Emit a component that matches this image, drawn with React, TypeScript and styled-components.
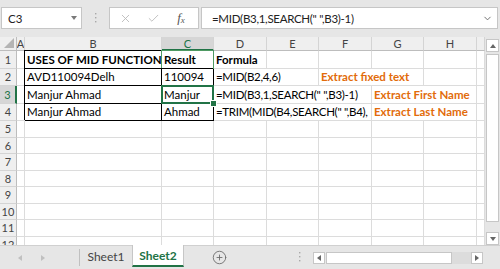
import React from "react";
import styled, { createGlobalStyle, css } from "styled-components";
import { X, Check, ChevronDown, CirclePlus } from "lucide-react";

const GREEN = "#217346";
const CHROME = "#e6e6e6";
const EDGE = "#c6c6c6";
const GRID = "#dcdcdc";
const ORANGE = "#e26b0a";

const GlobalStyle = createGlobalStyle`
  html, body { margin: 0; padding: 0; background: ${CHROME}; }
  body { font-family: Lato, "Liberation Sans", sans-serif; }
`;

const Window = styled.div`
  width: 500px;
  height: 269px;
  overflow: hidden;
  display: flex;
  flex-direction: column;
  background: ${CHROME};
  font-family: Lato, "Liberation Sans", sans-serif;
`;

/* ---------- formula bar ---------- */

const FormulaBar = styled.div`
  height: 37px;
  flex: none;
  display: flex;
  align-items: flex-start;
  padding: 7px 2px 0 1px;
  box-sizing: border-box;
`;

const NameBox = styled.div`
  width: 81px;
  height: 22px;
  box-sizing: border-box;
  background: #fff;
  border: 1px solid ${EDGE};
  display: flex;
  align-items: center;
  justify-content: space-between;
  padding: 0 4px 0 6px;
  font-size: 11.5px;
  color: #222;
`;

const Grip = styled.div<{ $w: number }>`
  width: ${(p) => p.$w}px;
  height: 22px;
  display: flex;
  align-items: center;
  justify-content: center;
  flex: none;
`;

const FxBox = styled.div`
  width: 90px;
  height: 22px;
  box-sizing: border-box;
  background: #fff;
  border: 1px solid ${EDGE};
  display: flex;
  align-items: center;
  padding-left: 1px;
`;

const FxButton = styled.div`
  width: 28px;
  display: flex;
  align-items: center;
  justify-content: center;
  color: #b8b8b8;
`;

const FxLabel = styled.span`
  font-family: "Liberation Serif", serif;
  font-style: italic;
  font-size: 13px;
  color: #555;
  & sub {
    font-size: 9px;
    vertical-align: -1px;
  }
`;

const FormulaInput = styled.div`
  flex: 1;
  margin-left: 2px;
  height: 22px;
  box-sizing: border-box;
  background: #fff;
  border: 1px solid ${EDGE};
  display: flex;
  align-items: center;
  justify-content: space-between;
  padding: 0 4px 0 10px;
  font-size: 11.5px;
  letter-spacing: -0.3px;
  color: #222;
  white-space: pre;
`;

/* ---------- sheet ---------- */

const SheetArea = styled.div`
  height: 208px;
  flex: none;
  display: flex;
`;

const Sheet = styled.div`
  width: 485px;
  height: 208px;
  overflow: hidden;
  background: #fff;
  display: grid;
  grid-template-columns: 17px 8px 137px 52px 53px 52px 53px 52px 53px 8px;
  grid-template-rows: 14px repeat(4, 17.5px) repeat(8, 16.5px);
  font-size: 11.5px;
`;

const headerBase = css`
  background: #efefef;
  color: #444;
  font-size: 11px;
  display: flex;
  align-items: center;
  justify-content: center;
  box-sizing: border-box;
  overflow: hidden;
`;

const Corner = styled.div`
  ${headerBase};
  border-right: 1px solid #bdbdbd;
  border-bottom: 1px solid #bdbdbd;
  align-items: flex-end;
  justify-content: flex-end;
  padding: 0 2px 2px 0;
`;

const ColHeader = styled.div<{ $selected?: boolean }>`
  ${headerBase};
  border-right: 1px solid #d4d4d4;
  border-bottom: 1px solid #bdbdbd;
  ${(p) =>
    p.$selected &&
    css`
      background: #d6d6d6;
      color: ${GREEN};
      border-bottom: 2px solid ${GREEN};
    `}
`;

const RowHeader = styled.div<{ $selected?: boolean }>`
  ${headerBase};
  border-right: 1px solid #bdbdbd;
  border-bottom: 1px solid #d4d4d4;
  ${(p) =>
    p.$selected &&
    css`
      background: #d6d6d6;
      color: ${GREEN};
      border-right: 2px solid ${GREEN};
    `}
`;

const Cell = styled.div<{
  $span?: number;
  $bold?: boolean;
  $accent?: boolean;
  $formula?: boolean;
  $frame?: string;
  $active?: boolean;
}>`
  grid-column: span ${(p) => p.$span ?? 1};
  box-sizing: border-box;
  border-right: 1px solid ${GRID};
  border-bottom: 1px solid ${GRID};
  display: flex;
  align-items: flex-end;
  padding: 0 2px 1px;
  line-height: 15px;
  white-space: pre;
  overflow: hidden;
  color: ${(p) => (p.$accent ? ORANGE : "#000")};
  font-weight: ${(p) => (p.$bold ? 700 : 400)};
  letter-spacing: ${(p) => (p.$formula ? "-0.3px" : "normal")};
  ${(p) =>
    p.$frame &&
    css`
      border-right-color: ${p.$frame};
      border-bottom-color: ${p.$frame};
      box-shadow: -1px -1px 0 0 ${p.$frame};
    `}
  ${(p) =>
    p.$active &&
    css`
      position: relative;
      z-index: 1;
      overflow: visible;
      &::after {
        content: "";
        position: absolute;
        top: -1px;
        left: -1px;
        right: -1px;
        bottom: -1px;
        border: 2px solid ${GREEN};
      }
      &::before {
        content: "";
        position: absolute;
        right: -4px;
        bottom: -4px;
        width: 5px;
        height: 5px;
        background: ${GREEN};
        border: 1px solid #fff;
        z-index: 2;
      }
    `}
`;

/* ---------- scrollbars ---------- */

const VScroll = styled.div`
  width: 15px;
  display: flex;
  flex-direction: column;
  padding: 2px 1px 0 1px;
  box-sizing: border-box;
  background: ${CHROME};
`;

const ArrowBox = styled.div<{ $size: number }>`
  flex: none;
  width: ${(p) => p.$size}px;
  height: ${(p) => p.$size}px;
  box-sizing: border-box;
  background: #fff;
  border: 1px solid ${EDGE};
  display: flex;
  align-items: center;
  justify-content: center;
`;

const VThumb = styled.div`
  flex: 1;
  margin: 2px 0 10px;
  background: #fff;
  border: 1px solid ${EDGE};
`;

const HScroll = styled.div`
  width: 170px;
  height: 12px;
  margin: 6px 0 0 8px;
  display: flex;
`;

const HThumb = styled.div`
  width: 126px;
  margin-left: 1px;
  box-sizing: border-box;
  background: #fff;
  border: 1px solid ${EDGE};
`;

const HTrack = styled.div`
  flex: 1;
  background: #dcdcdc;
`;

/* ---------- sheet tabs ---------- */

const TabBar = styled.div`
  flex: 1;
  display: flex;
  align-items: flex-start;
  border-top: 1px solid #d0d0d0;
  box-sizing: border-box;
`;

const TabNav = styled.div`
  width: 79px;
  height: 23px;
  display: flex;
  align-items: center;
  gap: 17px;
  padding-left: 17px;
  box-sizing: border-box;
`;

const TabDivider = styled.div`
  width: 1px;
  height: 17px;
  margin-top: 3px;
  background: #c0c0c0;
`;

const Tab = styled.div<{ $active?: boolean }>`
  width: 52px;
  height: 21px;
  box-sizing: border-box;
  display: flex;
  align-items: center;
  justify-content: center;
  font-size: 12px;
  color: #444;
  ${(p) =>
    p.$active &&
    css`
      background: #fff;
      color: ${GREEN};
      font-weight: 700;
      border-left: 1px solid ${EDGE};
      border-right: 1px solid ${EDGE};
      border-bottom: 2px solid ${GREEN};
      margin-top: -1px;
      height: 22px;
    `}
`;

const AddSheet = styled.div`
  width: 24px;
  height: 23px;
  margin-left: 23px;
  display: flex;
  align-items: center;
  justify-content: center;
  color: #6a6a6a;
`;

/* ---------- small drawings ---------- */

const Tri = ({ dir, color, size = 6 }: { dir: "up" | "down" | "left" | "right"; color: string; size?: number }) => {
  const pts = {
    up: "0,5 3,1 6,5",
    down: "0,1 6,1 3,5",
    left: "5,0 5,6 1,3",
    right: "1,0 1,6 5,3",
  }[dir];
  return (
    <svg width={size} height={size} viewBox="0 0 6 6">
      <polygon points={pts} fill={color} />
    </svg>
  );
};

const Dots = () => (
  <svg width="3" height="10" viewBox="0 0 3 10">
    <rect x="1" y="0" width="1.4" height="1.4" fill="#a8a8a8" />
    <rect x="1" y="4" width="1.4" height="1.4" fill="#a8a8a8" />
    <rect x="1" y="8" width="1.4" height="1.4" fill="#a8a8a8" />
  </svg>
);

const CornerMark = () => (
  <svg width="10" height="10" viewBox="0 0 10 10">
    <polygon points="10,0 10,10 0,10" fill="#b4b4b4" />
  </svg>
);

/* ---------- data ---------- */

type CellSpec = {
  col: number;
  span?: number;
  text?: string;
  bold?: boolean;
  accent?: boolean;
  formula?: boolean;
  frame?: string;
  active?: boolean;
};

const COLS = ["A", "B", "C", "D", "E", "F", "G", "H", ""];
const ROW_COUNT = 12;
const SELECTED_COL = 2;
const SELECTED_ROW = 3;

const data: Record<number, CellSpec[]> = {
  1: [
    { col: 1, text: "USES OF MID FUNCTION", bold: true, frame: "#000" },
    { col: 2, text: "Result", bold: true, frame: "#4f9a63" },
    { col: 3, text: "Formula", bold: true },
  ],
  2: [
    { col: 1, text: "AVD110094Delh", frame: "#000" },
    { col: 2, text: "110094", frame: "#000" },
    { col: 3, span: 2, text: "=MID(B2,4,6)", formula: true },
    { col: 5, span: 2, text: "Extract fixed text", bold: true, accent: true },
  ],
  3: [
    { col: 1, text: "Manjur Ahmad", frame: "#000" },
    { col: 2, text: "Manjur", frame: "#000", active: true },
    { col: 3, span: 3, text: '=MID(B3,1,SEARCH(" ",B3)-1)', formula: true },
    { col: 6, span: 2, text: "Extract First Name", bold: true, accent: true },
  ],
  4: [
    { col: 1, text: "Manjur Ahmad", frame: "#000" },
    { col: 2, text: "Ahmad", frame: "#000" },
    { col: 3, span: 3, text: '=TRIM(MID(B4,SEARCH(" ",B4),', formula: true },
    { col: 6, span: 2, text: "Extract Last Name", bold: true, accent: true },
  ],
};

const buildRow = (row: number): CellSpec[] => {
  const specs = data[row] ?? [];
  const cells: CellSpec[] = [];
  let c = 0;
  while (c < COLS.length) {
    const found = specs.find((s) => s.col === c);
    if (found) {
      cells.push(found);
      c += found.span ?? 1;
    } else {
      cells.push({ col: c });
      c += 1;
    }
  }
  return cells;
};

export default function App() {
  const rows = Array.from({ length: ROW_COUNT }, (_, i) => i + 1);
  return (
    <>
      <GlobalStyle />
      <Window>
        <FormulaBar>
          <NameBox>
            <span>C3</span>
            <Tri dir="down" color="#7a7a7a" />
          </NameBox>
          <Grip $w={27}>
            <Dots />
          </Grip>
          <FxBox>
            <FxButton>
              <X size={13} strokeWidth={1.6} />
            </FxButton>
            <FxButton>
              <Check size={13} strokeWidth={1.6} />
            </FxButton>
            <FxButton>
              <FxLabel>
                f<sub>x</sub>
              </FxLabel>
            </FxButton>
          </FxBox>
          <FormulaInput>
            <span>=MID(B3,1,SEARCH(" ",B3)-1)</span>
            <ChevronDown size={11} color="#666" strokeWidth={2} />
          </FormulaInput>
        </FormulaBar>

        <SheetArea>
          <Sheet>
            <Corner>
              <CornerMark />
            </Corner>
            {COLS.map((c, i) => (
              <ColHeader key={`h${i}`} $selected={i === SELECTED_COL}>
                {c}
              </ColHeader>
            ))}
            {rows.map((r) => (
              <React.Fragment key={r}>
                <RowHeader $selected={r === SELECTED_ROW}>{r}</RowHeader>
                {buildRow(r).map((cell) => (
                  <Cell
                    key={`${r}-${cell.col}`}
                    $span={cell.span}
                    $bold={cell.bold}
                    $accent={cell.accent}
                    $formula={cell.formula}
                    $frame={cell.frame}
                    $active={cell.active}
                  >
                    {cell.text}
                  </Cell>
                ))}
              </React.Fragment>
            ))}
          </Sheet>
          <VScroll>
            <ArrowBox $size={13}>
              <Tri dir="up" color="#666" />
            </ArrowBox>
            <VThumb />
            <ArrowBox $size={13}>
              <Tri dir="down" color="#666" />
            </ArrowBox>
          </VScroll>
        </SheetArea>

        <TabBar>
          <TabNav>
            <Tri dir="left" color="#c0c0c0" />
            <Tri dir="right" color="#c0c0c0" />
          </TabNav>
          <TabDivider />
          <Tab>Sheet1</Tab>
          <Tab $active>Sheet2</Tab>
          <AddSheet>
            <CirclePlus size={15} strokeWidth={1.4} />
          </AddSheet>
          <Grip $w={12} style={{ marginLeft: 62 }}>
            <Dots />
          </Grip>
          <HScroll>
            <ArrowBox $size={12}>
              <Tri dir="left" color="#666" />
            </ArrowBox>
            <HThumb />
            <HTrack />
            <ArrowBox $size={12}>
              <Tri dir="right" color="#666" />
            </ArrowBox>
          </HScroll>
        </TabBar>
      </Window>
    </>
  );
}
